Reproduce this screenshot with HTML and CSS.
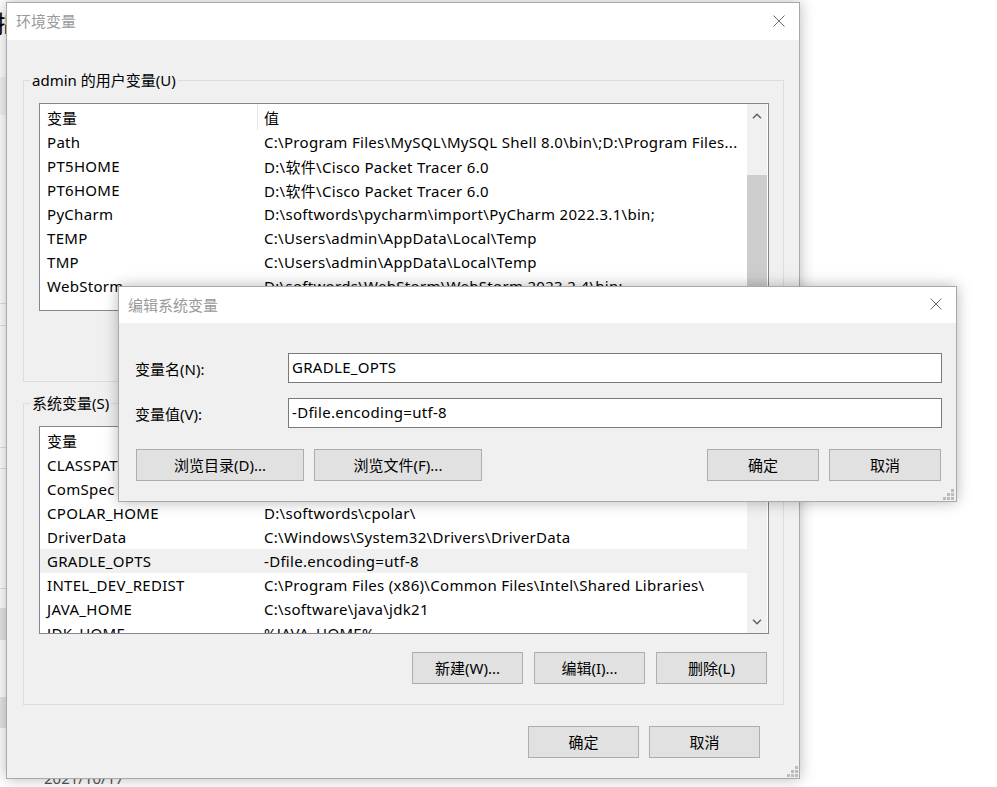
FILE: index.html
```html
<!DOCTYPE html>
<html lang="zh-CN">
<head>
  <meta charset="UTF-8">
  <title>环境变量</title>
  <link rel="stylesheet" href="styles.css">
</head>
<body>
  <div class="desktop">
    <!-- window behind, only its left edge shows -->
    <div class="backdrop">
      <span class="bg-heading">拙</span>
      <span class="bg-band"></span>
      <span class="bg-line l1"></span>
      <span class="bg-line l2"></span>
      <span class="bg-line l3"></span>
      <span class="bg-line l4"></span>
      <span class="bg-line l5"></span>
      <span class="bg-block b1"></span>
      <span class="bg-block b2"></span>
      <span class="bg-date">2021/10/17</span>
    </div>

    <!-- 环境变量 -->
    <div class="window env">
      <div class="titlebar">
        <span class="title">环境变量</span>
        <span class="close">
          <svg width="12" height="12" viewBox="0 0 12 12"><path d="M0.5 0.5L11.5 11.5M11.5 0.5L0.5 11.5" stroke="#6f6f6f" stroke-width="1" fill="none"/></svg>
        </span>
      </div>
      <div class="client">
        <div class="group">
          <span class="group-title">admin 的用户变量(U)</span>
          <div class="list">
            <div class="rows">
              <div class="row head"><span class="c1">变量</span><span class="c2">值</span></div>
              <div class="row"><span class="c1">Path</span><span class="c2">C:\Program Files\MySQL\MySQL Shell 8.0\bin\;D:\Program Files...</span></div>
              <div class="row"><span class="c1">PT5HOME</span><span class="c2">D:\软件\Cisco Packet Tracer 6.0</span></div>
              <div class="row"><span class="c1">PT6HOME</span><span class="c2">D:\软件\Cisco Packet Tracer 6.0</span></div>
              <div class="row"><span class="c1">PyCharm</span><span class="c2">D:\softwords\pycharm\import\PyCharm 2022.3.1\bin;</span></div>
              <div class="row"><span class="c1">TEMP</span><span class="c2">C:\Users\admin\AppData\Local\Temp</span></div>
              <div class="row"><span class="c1">TMP</span><span class="c2">C:\Users\admin\AppData\Local\Temp</span></div>
              <div class="row"><span class="c1">WebStorm</span><span class="c2">D:\softwords\WebStorm\WebStorm 2023.2.4\bin;</span></div>
            </div>
            <div class="scrollbar user-scroll">
              <span class="arrow">
                <svg width="10" height="6" viewBox="0 0 10 6"><path d="M1 5.2L5 1.2L9 5.2" stroke="#606060" stroke-width="1.5" fill="none"/></svg>
              </span>
              <span class="track"><span class="thumb"></span></span>
              <span class="arrow">
                <svg width="10" height="6" viewBox="0 0 10 6"><path d="M1 0.8L5 4.8L9 0.8" stroke="#606060" stroke-width="1.5" fill="none"/></svg>
              </span>
            </div>
          </div>
          <div class="actions">
            <button class="btn">新建(N)...</button>
            <button class="btn">编辑(E)...</button>
            <button class="btn">删除(D)</button>
          </div>
        </div>

        <div class="group">
          <span class="group-title">系统变量(S)</span>
          <div class="list">
            <div class="rows">
              <div class="row head"><span class="c1">变量</span><span class="c2">值</span></div>
              <div class="row"><span class="c1">CLASSPATH</span><span class="c2">.;%JAVA_HOME%\lib\dt.jar;%JAVA_HOME%\lib\tools.jar;</span></div>
              <div class="row"><span class="c1">ComSpec</span><span class="c2">C:\Windows\system32\cmd.exe</span></div>
              <div class="row"><span class="c1">CPOLAR_HOME</span><span class="c2">D:\softwords\cpolar\</span></div>
              <div class="row"><span class="c1">DriverData</span><span class="c2">C:\Windows\System32\Drivers\DriverData</span></div>
              <div class="row selected"><span class="c1">GRADLE_OPTS</span><span class="c2">-Dfile.encoding=utf-8</span></div>
              <div class="row"><span class="c1">INTEL_DEV_REDIST</span><span class="c2">C:\Program Files (x86)\Common Files\Intel\Shared Libraries\</span></div>
              <div class="row"><span class="c1">JAVA_HOME</span><span class="c2">C:\software\java\jdk21</span></div>
              <div class="row"><span class="c1">JDK_HOME</span><span class="c2">%JAVA_HOME%</span></div>
            </div>
            <div class="scrollbar sys-scroll">
              <span class="arrow">
                <svg width="10" height="6" viewBox="0 0 10 6"><path d="M1 5.2L5 1.2L9 5.2" stroke="#606060" stroke-width="1.5" fill="none"/></svg>
              </span>
              <span class="track"><span class="thumb"></span></span>
              <span class="arrow">
                <svg width="10" height="6" viewBox="0 0 10 6"><path d="M1 0.8L5 4.8L9 0.8" stroke="#606060" stroke-width="1.5" fill="none"/></svg>
              </span>
            </div>
          </div>
          <div class="actions">
            <button class="btn">新建(W)...</button>
            <button class="btn">编辑(I)...</button>
            <button class="btn">删除(L)</button>
          </div>
        </div>

        <div class="footer">
          <button class="btn">确定</button>
          <button class="btn">取消</button>
        </div>

        <svg class="grip" width="11" height="11" viewBox="0 0 11 11"><g fill="#bcbcbc"><rect x="8" y="0" width="3" height="3"/><rect x="4" y="4" width="3" height="3"/><rect x="8" y="4" width="3" height="3"/><rect x="0" y="8" width="3" height="3"/><rect x="4" y="8" width="3" height="3"/><rect x="8" y="8" width="3" height="3"/></g></svg>
      </div>
    </div>

    <!-- 编辑系统变量 -->
    <div class="window edit">
      <div class="titlebar">
        <span class="title">编辑系统变量</span>
        <span class="close">
          <svg width="12" height="12" viewBox="0 0 12 12"><path d="M0.5 0.5L11.5 11.5M11.5 0.5L0.5 11.5" stroke="#6f6f6f" stroke-width="1" fill="none"/></svg>
        </span>
      </div>
      <div class="client">
        <div class="field">
          <label class="field-label">变量名(N):</label>
          <input class="field-input" type="text" value="GRADLE_OPTS">
        </div>
        <div class="field">
          <label class="field-label">变量值(V):</label>
          <input class="field-input" type="text" value="-Dfile.encoding=utf-8">
        </div>
        <div class="dialog-buttons">
          <button class="btn wide">浏览目录(D)...</button>
          <button class="btn wide">浏览文件(F)...</button>
          <button class="btn ok">确定</button>
          <button class="btn">取消</button>
        </div>

        <svg class="grip" width="11" height="11" viewBox="0 0 11 11"><g fill="#bcbcbc"><rect x="8" y="0" width="3" height="3"/><rect x="4" y="4" width="3" height="3"/><rect x="8" y="4" width="3" height="3"/><rect x="0" y="8" width="3" height="3"/><rect x="4" y="8" width="3" height="3"/><rect x="8" y="8" width="3" height="3"/></g></svg>
      </div>
    </div>
  </div>
</body>
</html>
```

FILE: styles.css
```css
/* General Reset */
body {
  margin: 0;
  background: #fff;
  font-family: "Noto Sans", "Noto Sans CJK SC", sans-serif;
  font-size: 15px;
  color: #000;
}

button,
input {
  font: inherit;
  color: inherit;
}

/* Desktop canvas */
.desktop {
  position: relative;
  width: 997px;
  height: 787px;
  overflow: hidden;
}

/* Window behind */
.backdrop {
  position: absolute;
  left: 0;
  top: 0;
  width: 160px;
  height: 787px;
}

.bg-heading {
  position: absolute;
  left: -4px;
  top: 8px;
  font-size: 24px;
  line-height: 32px;
}

.bg-band {
  position: absolute;
  left: 0;
  top: 77px;
  width: 40px;
  height: 38px;
  background: #f3f3f3;
}

.bg-line {
  position: absolute;
  left: 0;
  width: 40px;
  height: 1px;
  background: #e3e3e3;
}

.l1 { top: 303px; }
.l2 { top: 325px; }
.l3 { top: 447px; }
.l4 { top: 468px; }
.l5 { top: 588px; }

.bg-block {
  position: absolute;
  left: 0;
  width: 40px;
  background: #e6e6e6;
}

.b1 { top: 608px; height: 32px; }
.b2 { top: 697px; height: 31px; }

.bg-date {
  position: absolute;
  left: 44px;
  top: 768px;
  color: #555;
  font-size: 15px;
}

/* Windows */
.window {
  position: absolute;
  display: flex;
  flex-direction: column;
  background: #f0f0f0;
  border: 1px solid #a9a9a9;
  box-shadow: 0 0 14px rgba(0, 0, 0, 0.28);
}

.env {
  left: 6px;
  top: 2px;
  width: 792px;
  height: 775px;
}

.edit {
  left: 118px;
  top: 286px;
  width: 837px;
  height: 214px;
}

.titlebar {
  display: flex;
  align-items: center;
  justify-content: space-between;
  height: 37px;
  box-sizing: border-box;
  padding-left: 9px;
  padding-bottom: 2px;
  background: #fff;
  flex-shrink: 0;
}

.edit .titlebar {
  height: 36px;
}

.title {
  color: #9a9a9a;
}

.close {
  display: flex;
  align-items: center;
  justify-content: center;
  width: 40px;
  height: 100%;
}

.client {
  position: relative;
  flex: 1;
}

.env .client {
  padding: 40px 15px 0 16px;
}

.edit .client {
  padding: 0 14px 0 16px;
}

/* Group boxes */
.group {
  display: flex;
  flex-direction: column;
  border: 1px solid #dcdcdc;
  padding: 0 14px 20px 15px;
}

.group + .group {
  margin-top: 21px;
}

.group-title {
  align-self: flex-start;
  margin: -11px 0 0 -9px;
  padding: 0 2px;
  line-height: 20px;
  background: #f0f0f0;
}

/* List views */
.list {
  display: flex;
  height: 208px;
  box-sizing: border-box;
  margin-top: 13px;
  border: 1px solid #828790;
  background: #fff;
}

.rows {
  flex: 1;
  overflow: hidden;
}

.row {
  display: flex;
  align-items: center;
  height: 24px;
  padding-left: 5px;
  white-space: nowrap;
  letter-spacing: 0.3px;
}

.row.head {
  height: 26px;
  letter-spacing: 0;
}

.row.selected {
  background: #f0f0f0;
}

.c1 {
  width: 213px;
  flex-shrink: 0;
  box-sizing: border-box;
  padding-left: 2px;
  overflow: hidden;
}

.head .c1 {
  align-self: stretch;
  display: flex;
  align-items: center;
  border-right: 1px solid #e5e5e5;
}

.c2 {
  flex: 1;
  padding-left: 6px;
  overflow: hidden;
}

/* Scrollbars */
.scrollbar {
  display: flex;
  flex-direction: column;
  width: 20px;
  margin-right: 1px;
  background: #f0f0f0;
}

.arrow {
  display: flex;
  align-items: center;
  justify-content: center;
  height: 23px;
  flex-shrink: 0;
}

.track {
  display: flex;
  flex-direction: column;
  flex: 1;
}

.user-scroll .track {
  padding-top: 48px;
}

.user-scroll .thumb {
  flex: 1;
  background: #cdcdcd;
}

.sys-scroll .thumb {
  height: 45px;
  background: #cdcdcd;
}

/* Buttons */
.btn {
  width: 111px;
  height: 32px;
  padding: 0;
  border: 1px solid #adadad;
  background: #e1e1e1;
  line-height: 28px;
}

.actions {
  display: flex;
  justify-content: flex-end;
  gap: 11px;
  margin-top: 18px;
  padding-right: 2px;
}

.footer {
  display: flex;
  justify-content: flex-end;
  gap: 10px;
  margin-top: 21px;
  padding-right: 24px;
}

/* Edit dialog */
.field {
  display: flex;
  align-items: center;
}

.field:first-child {
  margin-top: 30px;
}

.field + .field {
  margin-top: 15px;
}

.field-label {
  width: 153px;
  flex-shrink: 0;
}

.field-input {
  flex: 1;
  height: 30px;
  box-sizing: border-box;
  border: 1px solid #7a7a7a;
  padding: 0 3px 2px;
  background: #fff;
  outline: none;
  letter-spacing: 0.3px;
}

.dialog-buttons {
  display: flex;
  gap: 10px;
  margin: 21px 1px 0 1px;
}

.edit .btn {
  width: 112px;
}

.edit .btn.wide {
  width: 168px;
}

.btn.ok {
  margin-left: auto;
}

.grip {
  position: absolute;
  right: 1px;
  bottom: 1px;
}

.edit .grip {
  right: 2px;
}
```
